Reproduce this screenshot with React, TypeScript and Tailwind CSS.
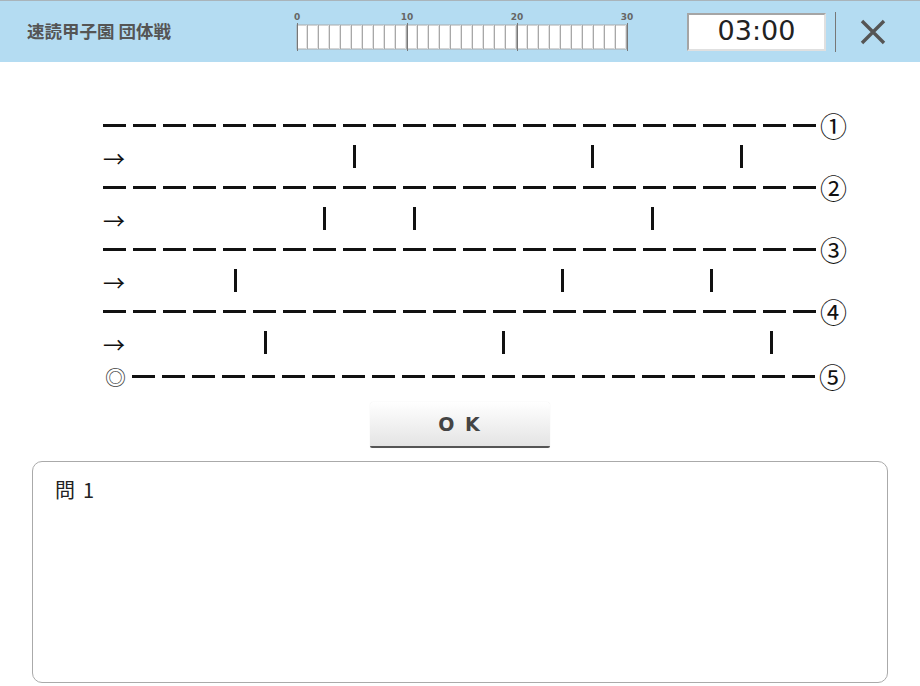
import React from 'react';

const jp = { fontFamily: '"Noto Sans CJK JP", "Noto Sans", sans-serif' };

// bar positions (cell index) for each arrow row
const rows: number[][] = [
  [8, 16, 21],
  [7, 10, 18],
  [4, 15, 20],
  [5, 13, 22],
];

const circled = ['①', '②', '③', '④', '⑤'];

function Ruler() {
  const cells = Array.from({ length: 30 }, (_, i) => i);
  return (
    <svg width="340" height="48" viewBox="0 0 340 48" className="block">
      {[0, 10, 20, 30].map((n) => (
        <text
          key={n}
          x={3 + n * 11}
          y="15"
          textAnchor="middle"
          fontSize="9"
          fontWeight="bold"
          fill="#666"
          fontFamily="DejaVu Sans, sans-serif"
        >
          {n}
        </text>
      ))}
      <rect x="3" y="20" width="330" height="24" fill="#fff" stroke="#aaa" strokeWidth="1" />
      {cells.map((i) => (
        <g key={i}>
          <line x1={3 + i * 11 + 9.5} y1="20" x2={3 + i * 11 + 9.5} y2="44" stroke="#e2e2e2" strokeWidth="1" />
          <line x1={3 + i * 11 + 10.5} y1="20" x2={3 + i * 11 + 10.5} y2="44" stroke="#a8a8a8" strokeWidth="1" />
        </g>
      ))}
      {[0, 10, 20, 30].map((n) => (
        <line key={n} x1={3.5 + n * 11} y1="18" x2={3.5 + n * 11} y2="46" stroke="#777" strokeWidth="1" />
      ))}
    </svg>
  );
}

function DashLine({ count }: { count: number }) {
  return (
    <div className="flex gap-[7px]">
      {Array.from({ length: count }, (_, i) => (
        <div key={i} className="w-[23px] h-[3px] bg-[#111]" />
      ))}
    </div>
  );
}

function LineRow({ n, last }: { n: number; last?: boolean }) {
  return (
    <div className={`flex items-center h-[31px] pl-[103px] ${last ? 'mt-[3px]' : ''}`}>
      {last ? (
        <span className="w-[29px] text-[21px] leading-none text-[#444] pl-[2px]" style={jp}>
          ◎
        </span>
      ) : null}
      <DashLine count={last ? 23 : 24} />
      <span className="ml-[4px] text-[27px] leading-none text-[#111]" style={jp}>
        {circled[n]}
      </span>
    </div>
  );
}

function ArrowRow({ bars }: { bars: number[] }) {
  return (
    <div className="flex items-center h-[31px] pl-[103px]">
      {Array.from({ length: 24 }, (_, i) => (
        <div key={i} className="w-[29.75px] h-full flex items-center shrink-0">
          {i === 0 ? (
            <span className="text-[22px] leading-none text-[#111]" style={jp}>
              →
            </span>
          ) : bars.includes(i) ? (
            <div className="ml-[12px] w-[3px] h-[23px] bg-[#111]" />
          ) : null}
        </div>
      ))}
    </div>
  );
}

export default function App() {
  return (
    <div className="w-[920px] h-[686px] bg-white overflow-hidden">
      {/* Header */}
      <div className="h-[62px] bg-[#b4dcf2] border-t border-[#a9b4bb] flex items-center">
        <div className="w-[294px] pl-[27px] text-[17.5px] font-bold text-[#555]" style={jp}>
          速読甲子園 団体戦
        </div>
        <div className="-mt-[6px]">
          <Ruler />
        </div>
        <div
          className="ml-[53px] w-[139px] h-[38px] bg-white border-2 border-t-[#a5a5a5] border-l-[#a5a5a5] border-r-[#e0e0e0] border-b-[#e0e0e0] flex items-center justify-center text-[27px] text-[#222]"
          style={{ fontFamily: '"DejaVu Sans", sans-serif' }}
        >
          03:00
        </div>
        <div className="ml-[9px] w-px h-[40px] bg-[#777]" />
        <svg width="26" height="26" viewBox="0 0 26 26" className="ml-[24px]">
          <path d="M2 2 L24 24 M24 2 L2 24" stroke="#555" strokeWidth="3.4" strokeLinecap="butt" />
        </svg>
      </div>

      {/* Problem */}
      <div className="pt-[48px]">
        {rows.map((bars, i) => (
          <React.Fragment key={i}>
            <LineRow n={i} />
            <ArrowRow bars={bars} />
          </React.Fragment>
        ))}
        <LineRow n={4} last />
      </div>

      {/* OK button */}
      <div className="flex justify-center mt-[10px]">
        <button
          className="w-[180px] h-[46px] rounded-t-[4px] rounded-b-[2px] bg-gradient-to-b from-white to-[#e4e4e4] border-b-2 border-[#555] shadow-[0_0_1px_rgba(0,0,0,0.15)] text-[19px] font-bold text-[#444] tracking-[2px]"
          style={{ fontFamily: '"DejaVu Sans", sans-serif' }}
        >
          O K
        </button>
      </div>

      {/* Question box */}
      <div className="mx-[32px] mt-[13px] h-[222px] border border-[#aaa] rounded-[10px] pt-[13px] pl-[22px]">
        <div className="text-[20px] text-[#222] flex gap-[8px]" style={jp}>
          <span>問</span>
          <span>1</span>
        </div>
      </div>
    </div>
  );
}
